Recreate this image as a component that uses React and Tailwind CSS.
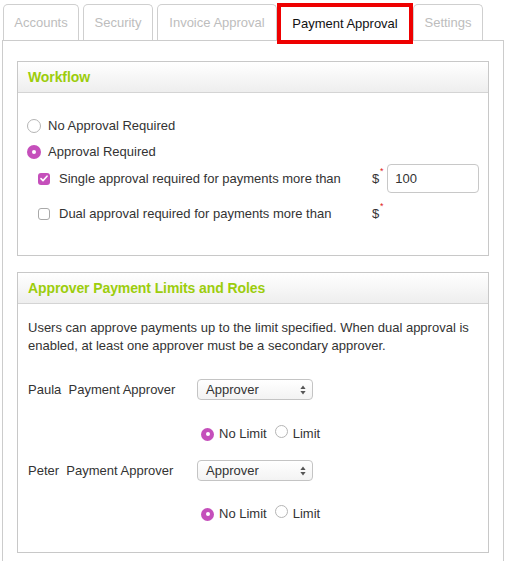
import React from "react";

const MAG = "bg-[#c54fbb]";

function Radio({ checked, size = 14 }) {
  if (checked) {
    return (
      <span
        className={`inline-flex items-center justify-center rounded-full ${MAG} shrink-0`}
        style={{ width: size, height: size }}
      >
        <span className="w-[4px] h-[4px] rounded-full bg-white" />
      </span>
    );
  }
  return (
    <span
      className="inline-block rounded-full border border-[#b5b5b5] bg-white shrink-0"
      style={{ width: size, height: size }}
    />
  );
}

function Check({ checked }) {
  if (checked) {
    return (
      <span className={`inline-flex items-center justify-center w-[12px] h-[12px] rounded-[3px] ${MAG} shrink-0`}>
        <svg width="8" height="7" viewBox="0 0 8 7">
          <path d="M1 3.6 L3 5.6 L7 1.2" stroke="white" strokeWidth="1.6" fill="none" strokeLinecap="round" strokeLinejoin="round" />
        </svg>
      </span>
    );
  }
  return <span className="inline-block w-[12px] h-[12px] rounded-[3px] border border-[#a9a9a9] bg-white shrink-0" />;
}

function Dollar() {
  return (
    <span className="relative text-[13px] text-[#333]">
      $<span className="absolute -top-[4px] left-[8px] text-[9px] text-[#e02020]">*</span>
    </span>
  );
}

function Select() {
  return (
    <div className="w-[116px] h-[21px] rounded-[4px] border border-[#c4c4c4] bg-gradient-to-b from-white to-[#f3f3f3] flex items-center justify-between pl-[8px] pr-[6px] text-[13px] text-[#333]">
      <span>Approver</span>
      <svg width="6" height="10" viewBox="0 0 6 10">
        <path d="M3 0.5 L5.6 4 L0.4 4 Z" fill="#555" />
        <path d="M3 9.5 L5.6 6 L0.4 6 Z" fill="#555" />
      </svg>
    </div>
  );
}

function Card({ title, children, className = "" }) {
  return (
    <div className={`mx-[14px] border border-[#c8c8c8] bg-white ${className}`}>
      <div className="h-[31px] border-b border-[#d4d4d4] bg-gradient-to-b from-white to-[#eeeeee] flex items-center pl-[10px]">
        <span className="text-[14px] font-bold text-[#9ccd0c] tracking-[-0.1px]">{title}</span>
      </div>
      {children}
    </div>
  );
}

function LimitRow({ className = "" }) {
  return (
    <div className={`flex items-center h-[20px] pl-[183px] text-[13px] text-[#333] ${className}`}>
      <Radio checked size={13} />
      <span className="ml-[5px]">No Limit</span>
      <span className="ml-[8px]"><Radio size={13} /></span>
      <span className="ml-[5px]">Limit</span>
    </div>
  );
}

function ApproverRow({ name, className = "" }) {
  return (
    <div className={`flex items-center h-[21px] pl-[10px] text-[13px] text-[#333] ${className}`}>
      <span className="w-[169px]">
        {name}
        {"\u00a0\u00a0"}Payment Approver
      </span>
      <Select />
    </div>
  );
}

export default function App() {
  const tab = "h-[36px] mt-[4px] border border-b-0 border-[#cfcfcf] rounded-t-[5px] bg-white flex items-center justify-center text-[13px] text-[#bdbdbd]";
  return (
    <div className="w-[509px] h-[561px] overflow-hidden bg-white" style={{ fontFamily: '"Liberation Sans", Arial, sans-serif' }}>
      <div className="flex items-start h-[40px] pl-[3px]">
        <div className={`${tab} w-[76px]`}>Accounts</div>
        <div className={`${tab} w-[70px] ml-[4px]`}>Security</div>
        <div className={`${tab} w-[120px] ml-[4px]`}>Invoice Approval</div>
        <div className="relative z-10 w-[136px] h-[41px] mt-[3px] border-[4px] border-[#ee0000] bg-white flex items-center justify-center text-[13px] text-[#111]">
          Payment Approval
        </div>
        <div className={`${tab} w-[70px]`}>Settings</div>
      </div>
      <div className="ml-[2px] w-[502px] h-[540px] border border-b-0 border-[#cccccc] pt-[20px]">
        <Card title="Workflow">
          <div className="pt-[23px] pb-[31px] text-[13px] text-[#333]">
            <div className="flex items-center h-[20px] pl-[9px]">
              <Radio />
              <span className="ml-[7px]">No Approval Required</span>
            </div>
            <div className="flex items-center h-[20px] pl-[9px] mt-[6px]">
              <Radio checked />
              <span className="ml-[7px]">Approval Required</span>
            </div>
            <div className="flex items-center h-[29px] pl-[20px] mt-[2px]">
              <Check checked />
              <span className="ml-[9px] w-[313px]">Single approval required for payments more than</span>
              <Dollar />
              <div className="ml-[8px] w-[92px] h-[29px] rounded-[4px] border border-[#c8c8c8] flex items-center pl-[7px]">100</div>
            </div>
            <div className="flex items-center h-[20px] pl-[20px] mt-[11px]">
              <Check />
              <span className="ml-[9px] w-[313px]">Dual approval required for payments more than</span>
              <Dollar />
            </div>
          </div>
        </Card>
        <Card title="Approver Payment Limits and Roles" className="mt-[16px]">
          <div className="pt-[15px] pb-[28px]">
            <p className="px-[10px] text-[13px] leading-[18px] text-[#333]">
              Users can approve payments up to the limit specified. When dual approval is enabled, at least one approver must be a secondary approver.
            </p>
            <ApproverRow name="Paula" className="mt-[24px]" />
            <LimitRow className="mt-[24px]" />
            <ApproverRow name="Peter" className="mt-[16px]" />
            <LimitRow className="mt-[23px]" />
          </div>
        </Card>
      </div>
    </div>
  );
}
